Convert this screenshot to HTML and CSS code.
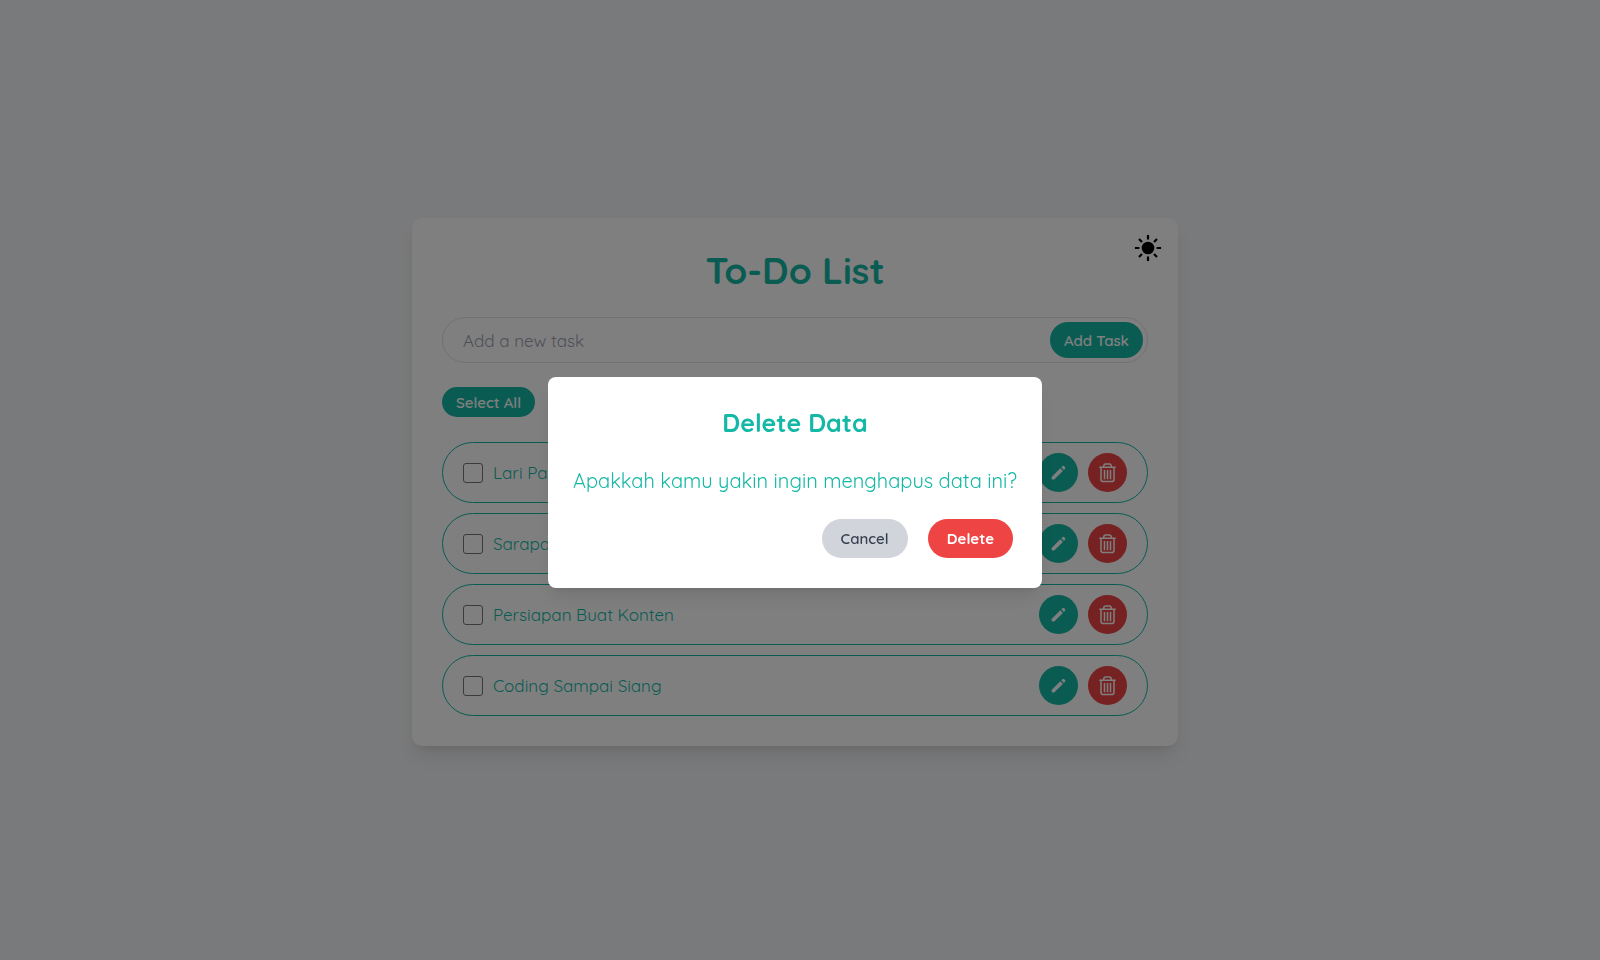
FILE: index.html
```html
<!DOCTYPE html>
<html lang="id">
<head>
<meta charset="utf-8">
<title>To-Do List</title>
<link rel="stylesheet" href="styles.css">
</head>
<body>
<svg class="sprite" aria-hidden="true">
  <symbol id="pencil" viewBox="0 0 20 20">
    <path d="M2.600 14 11.300 5.300 13.900 7.900 5.200 16.600H3.600Q2.600 16.600 2.600 15.600ZM12.300 4.300 13.400 3.200Q14.300 2.300 15.200 3.200L16 4Q16.900 4.900 16 5.800L14.900 6.900Z" fill="currentColor"/>
  </symbol>
  <symbol id="trash" viewBox="0 0 20 20">
    <path d="M1.300 4.200H17.700M5.500 3.900Q5.900 1.100 7.500 1.100H11.500Q13.100 1.100 13.500 3.900M3 4.200V16.200Q3 18.600 5.400 18.600H13.600Q16 18.600 16 16.200V4.200M6.500 6.900V16.200M9.500 6.900V16.200M12.500 6.900V16.200" fill="none" stroke="currentColor" stroke-width="1.500"/>
  </symbol>
</svg>
<main class="page">
  <section class="card">
    <button class="theme" type="button" aria-label="Toggle theme">
      <svg viewBox="0 0 28 28" fill="none" stroke="currentColor" stroke-width="2.200" aria-hidden="true"><circle cx="14" cy="14" r="6.300" fill="currentColor" stroke="none"/><path d="M14 .9V5.400M14 22.600V27.100M.9 14H5.400M22.600 14H27.100M5 5 8 8M20 20 23 23M5 23 8 20M20 8 23 5"/></svg>
    </button>
    <h1 class="title">To-Do List</h1>
    <form class="add">
      <input class="add-input" type="text" placeholder="Add a new task" aria-label="Add a new task">
      <button class="add-button" type="button">Add Task</button>
    </form>
    <button class="select-all" type="button">Select All</button>
    <ul class="tasks">
      <li class="task"><label class="task-label"><input class="check" type="checkbox">Lari Pagi</label><button class="round edit" type="button" aria-label="Edit"><svg aria-hidden="true"><use href="#pencil"/></svg></button><button class="round remove" type="button" aria-label="Delete"><svg aria-hidden="true"><use href="#trash"/></svg></button></li>
      <li class="task"><label class="task-label"><input class="check" type="checkbox">Sarapan</label><button class="round edit" type="button" aria-label="Edit"><svg aria-hidden="true"><use href="#pencil"/></svg></button><button class="round remove" type="button" aria-label="Delete"><svg aria-hidden="true"><use href="#trash"/></svg></button></li>
      <li class="task"><label class="task-label"><input class="check" type="checkbox">Persiapan Buat Konten</label><button class="round edit" type="button" aria-label="Edit"><svg aria-hidden="true"><use href="#pencil"/></svg></button><button class="round remove" type="button" aria-label="Delete"><svg aria-hidden="true"><use href="#trash"/></svg></button></li>
      <li class="task"><label class="task-label"><input class="check" type="checkbox">Coding Sampai Siang</label><button class="round edit" type="button" aria-label="Edit"><svg aria-hidden="true"><use href="#pencil"/></svg></button><button class="round remove" type="button" aria-label="Delete"><svg aria-hidden="true"><use href="#trash"/></svg></button></li>
    </ul>
  </section>
</main>
<div class="overlay">
  <div class="dialog" role="dialog" aria-modal="true" aria-labelledby="dialog-title">
    <h2 class="dialog-title" id="dialog-title">Delete Data</h2>
    <p class="dialog-text">Apakkah kamu yakin ingin menghapus data ini?</p>
    <div class="actions">
      <button class="action cancel" type="button">Cancel</button>
      <button class="action confirm" type="button">Delete</button>
    </div>
  </div>
</div>
</body>
</html>
```
FILE: styles.css
```css
* { box-sizing: border-box; margin: 0; padding: 0; }
body { font-family: Quicksand, Lato, sans-serif; color: #14b8a6; background: #f3f4f6; overflow: hidden; }
button, input { font: inherit; border: 0; }
button { cursor: pointer; }
.sprite { display: none; }
.page, .overlay { display: flex; align-items: center; justify-content: center; padding: 4px 10px 0 0; }
.page { min-height: 100vh; }
.card { position: relative; width: 766px; max-width: 100%; padding: 30px; border-radius: 10px; background: #fff; box-shadow: 0 12px 19px -4px rgba(0,0,0,.1), 0 5px 8px -5px rgba(0,0,0,.1); }
.theme { position: absolute; top: 16px; right: 16px; width: 28px; height: 28px; background: none; color: #000; }
.theme svg { display: block; width: 28px; height: 28px; }
.title { font-size: 37px; line-height: 44px; font-weight: 700; text-align: center; }
.add { display: flex; align-items: center; margin-top: 25px; padding: 4px; border: 1px solid #e0e2e6; border-radius: 23px; }
.add-input { flex: 1; min-width: 0; height: 36px; padding-left: 16px; font-size: 17px; background: none; outline: none; }
.add-input::placeholder { color: #9ca3af; opacity: 1; }
.add-button { height: 36px; padding: 0 14px; border-radius: 18px; font-size: 15px; font-weight: 600; color: #fff; background: #14b8a6; }
.select-all { display: block; height: 30px; margin-top: 24px; padding: 0 14px; border-radius: 15px; font-size: 15px; font-weight: 600; color: #fff; background: #14b8a6; }
.tasks { display: grid; gap: 10px; margin-top: 25px; list-style: none; }
.task { display: flex; align-items: center; gap: 10px; padding: 10px 20px; border: 1px solid #14b8a6; border-radius: 31px; }
.task-label { flex: 1; display: flex; align-items: center; gap: 10px; font-size: 17px; }
.check { appearance: none; width: 20px; height: 20px; border: 1px solid #767676; border-radius: 3px; }
.round { display: grid; place-items: center; width: 39px; height: 39px; border-radius: 50%; color: #fff; }
.round svg { width: 20px; height: 20px; }
.edit { background: #14b8a6; }
.remove { background: #ef4444; }
.overlay { position: fixed; inset: 0; background: rgba(0,0,0,.5); }
.dialog { padding: 30px 25px; border-radius: 8px; background: #fff; box-shadow: 0 12px 19px -4px rgba(0,0,0,.1), 0 5px 8px -5px rgba(0,0,0,.1); }
.dialog-title { font-size: 25px; line-height: 32px; text-align: center; }
.dialog-text { margin-top: 24px; font-size: 20px; line-height: 35px; }
.actions { display: flex; justify-content: flex-end; gap: 20px; margin-top: 21px; padding: 0 4px; }
.action { height: 39px; padding: 0 19px; border-radius: 20px; font-size: 15px; font-weight: 600; }
.cancel { color: #374151; background: #d1d5db; }
.confirm { font-weight: 700; color: #fff; background: #ef4444; }
```
